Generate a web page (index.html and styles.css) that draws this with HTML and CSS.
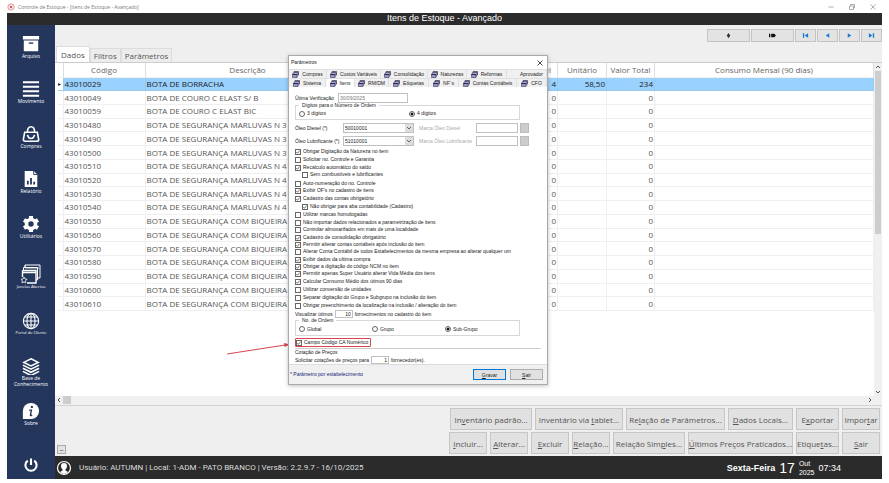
FILE: index.html
```
<!DOCTYPE html>
<html lang="pt-BR">
<head>
<meta charset="utf-8">
<title>Controle de Estoque</title>
<link rel="stylesheet" href="styles.css">
</head>
<body>
<svg class="defs" aria-hidden="true">
  <symbol id="win" viewBox="0 0 14 14">
    <path d="M4 1h9v7H4z" fill="#6a5fa8" stroke="#1c1c3c"/><path d="M2.500 3.500h9v7h-9z" fill="#fff" stroke="#1c1c3c"/><path d="M1 6h9v7H1z" fill="#9a95c8" stroke="#1c1c3c"/><path d="M1 6h9v2H1z" fill="#27265e"/>
  </symbol>
</svg>
<div class="app">
  <header class="titlebar">
    <svg class="logo" viewBox="0 0 10 10"><circle cx="5" cy="5" r="4" fill="#fbe9e9" stroke="#d88"/><path d="M3.500 3.500l3 3m0-3l-3 3" stroke="#c55" stroke-width="1.200"/></svg>
    <span>Controle de Estoque - [Itens de Estoque - Avançado]</span>
    <div class="winctl">
      <svg viewBox="0 0 8 8"><path d="M1.500 4h5"/></svg>
      <svg viewBox="0 0 8 8"><path d="M1.500 3h4v3.500h-4zM2.500 3V1.500h4V5H5.500"/></svg>
      <svg viewBox="0 0 8 8"><path d="M1.500 1.500l5 5m0-5l-5 5"/></svg>
    </div>
  </header>
  <h1 class="heading">Itens de Estoque - Avançado</h1>
  <div class="body">
    <nav class="side">
      <a href="#"><svg viewBox="0 0 20 20"><path fill="#fff" d="M1 1h18v4H1zM2 6h16v12H2z"/><path stroke="#24365c" stroke-width="1.500" d="M7.500 9h5"/></svg>Arquivo</a>
      <a href="#"><svg viewBox="0 0 20 20"><path stroke="#fff" stroke-width="2.200" d="M1 2.500h18M1 7.500h18M1 12.500h18M1 17.500h18"/></svg>Movimento</a>
      <a href="#"><svg viewBox="0 0 20 20" fill="none" stroke="#fff" stroke-width="1.800"><path d="M3 8h14l1.500 8q0 2-2 2h-13q-2 0-2-2zM6 8q0-6 4-6t4 6M6 11q1 4 4 4t4-4"/></svg>Compras</a>
      <a href="#"><svg viewBox="0 0 20 20"><path fill="#fff" d="M3 1h10l4 4v14H3z"/><path fill="none" stroke="#24365c" stroke-width="2" d="M6.500 16v-4M10 16V9M13.500 16v-3"/><path d="M13 1v4h4" fill="none" stroke="#24365c"/></svg>Relatório</a>
      <a href="#"><svg viewBox="0 0 20 20"><circle cx="10" cy="10" r="5" fill="none" stroke="#fff" stroke-width="4"/><path stroke="#fff" stroke-width="4.500" d="M10 1v4M10 15v4M2.200 5.500l3.500 2M14.300 12.500l3.500 2M2.200 14.500l3.500-2M14.300 7.500l3.500-2"/></svg>Utilitários</a>
      <a href="#" class="small windows"><svg viewBox="0 0 20 20" fill="none" stroke="#fff"><path d="M4 4V1h15v13h-2M2.500 6.500V3.500h14V16H15"/><path d="M1.500 6.500H15V19H6M1.500 6.500V13M1.500 8.500H15" stroke-width="1.400"/><path stroke-width=".8" d="M3 13l1 2 2 .3-1.500 1.500.3 2L3 18l-2 .8.300-2L0 15.300l2-.3zM4 1v3h14"/></svg>Janelas Abertas</a>
      <a href="#" class="small"><svg viewBox="0 0 20 20" fill="none" stroke="#fff" stroke-width="1.200"><circle cx="10" cy="10" r="8.500"/><ellipse cx="10" cy="10" rx="4.500" ry="8.500"/><path d="M10 1.500v17M1.500 10h17M3 5.500h14M3 14.500h14"/></svg>Portal do Cliente</a>
      <a href="#" class="two"><svg viewBox="0 0 20 20" fill="none" stroke="#fff" stroke-width="1.700"><path d="M10 2l8 4-8 4-8-4zM1 9l9 4.500L19 9M1 12.500L10 17l9-4.500M1 16l9 4.500L19 16"/></svg>Base de Conhecimento</a>
      <a href="#"><svg viewBox="0 0 20 20"><path fill="#fff" d="M10 1a9 9 0 1 1 0 18H1v-9a9 9 0 0 1 9-9z"/><circle cx="11" cy="5.500" r="1.300" fill="#24365c"/><path d="M8 9h2.500l-1.200 5.500q0 1 2 0" fill="none" stroke="#24365c" stroke-width="1.500"/></svg>Sobre</a>
      <a href="#" class="power" aria-label="Sair do sistema"><svg viewBox="0 0 20 20" fill="none" stroke="#fff" stroke-width="2.600"><path d="M10 2v8M6 4.500a7 7 0 1 0 8 0"/></svg></a>
    </nav>
    <main class="main">
      <div class="toolbar">
        <button class="wide" aria-label="Ordenar"><svg viewBox="0 0 8 8"><path d="M4 1l2 3-2 3-2-3z" fill="#333"/></svg></button>
        <button class="wide" aria-label="Ir para"><svg viewBox="0 0 8 8"><path d="M0 2h1.500v4H0zM2.500 2H6l2 2-2 2H2.500z" fill="#111"/></svg></button>
        <button aria-label="Primeiro"><svg viewBox="0 0 8 8"><path d="M1 1.500h1.500v5H1zM7 1.500v5L3 4z" fill="#1779d4"/></svg></button>
        <button aria-label="Anterior"><svg viewBox="0 0 8 8"><path d="M6 1.500v5L2 4z" fill="#1779d4"/></svg></button>
        <button aria-label="Próximo"><svg viewBox="0 0 8 8"><path d="M2 1.500v5L6 4z" fill="#1779d4"/></svg></button>
        <button aria-label="Último"><svg viewBox="0 0 8 8"><path d="M1 1.500v5L5 4zM5.500 1.500H7v5H5.500z" fill="#1779d4"/></svg></button>
      </div>
      <div class="tabs" role="tablist">
        <button role="tab" aria-selected="true" class="on">Dados</button><button role="tab">Filtros</button><button role="tab">Parâmetros</button>
      </div>
      <div class="grid">
        <div class="view">
          <table>
            <colgroup><col class="c0"><col class="c1"><col class="c2"><col><col class="c4"><col class="c5"><col class="c6"><col class="c7"></colgroup>
            <thead><tr><th></th><th>Código</th><th>Descrição</th><th></th><th class="r">Disponível</th><th>Unitário</th><th>Valor Total</th><th>Consumo Mensal (90 dias)</th></tr></thead>
            <tbody>
              <tr class="sel"><td class="mark">▸</td><td>43010029</td><td>BOTA DE BORRACHA</td><td></td><td>4</td><td>58,50</td><td>234</td><td></td></tr>
              <tr><td></td><td>43010049</td><td>BOTA DE COURO C ELAST S/ B</td><td></td><td>0</td><td></td><td>0</td><td></td></tr>
              <tr><td></td><td>43010059</td><td>BOTA DE COURO C ELAST BIC</td><td></td><td>0</td><td></td><td>0</td><td></td></tr>
              <tr><td></td><td>43010480</td><td>BOTA DE SEGURANÇA MARLUVAS N 3</td><td></td><td>0</td><td></td><td>0</td><td></td></tr>
              <tr><td></td><td>43010490</td><td>BOTA DE SEGURANÇA MARLUVAS N 3</td><td></td><td>0</td><td></td><td>0</td><td></td></tr>
              <tr><td></td><td>43010500</td><td>BOTA DE SEGURANÇA MARLUVAS N 3</td><td></td><td>0</td><td></td><td>0</td><td></td></tr>
              <tr><td></td><td>43010510</td><td>BOTA DE SEGURANÇA MARLUVAS N 4</td><td></td><td>0</td><td></td><td>0</td><td></td></tr>
              <tr><td></td><td>43010520</td><td>BOTA DE SEGURANÇA MARLUVAS N 4</td><td></td><td>0</td><td></td><td>0</td><td></td></tr>
              <tr><td></td><td>43010530</td><td>BOTA DE SEGURANÇA MARLUVAS N 4</td><td></td><td>0</td><td></td><td>0</td><td></td></tr>
              <tr><td></td><td>43010540</td><td>BOTA DE SEGURANÇA MARLUVAS N 4</td><td></td><td>0</td><td></td><td>0</td><td></td></tr>
              <tr><td></td><td>43010550</td><td>BOTA DE SEGURANÇA COM BIQUEIRA</td><td></td><td>0</td><td></td><td>0</td><td></td></tr>
              <tr><td></td><td>43010560</td><td>BOTA DE SEGURANÇA COM BIQUEIRA</td><td></td><td>0</td><td></td><td>0</td><td></td></tr>
              <tr><td></td><td>43010570</td><td>BOTA DE SEGURANÇA COM BIQUEIRA</td><td></td><td>0</td><td></td><td>0</td><td></td></tr>
              <tr><td></td><td>43010580</td><td>BOTA DE SEGURANÇA COM BIQUEIRA</td><td></td><td>0</td><td></td><td>0</td><td></td></tr>
              <tr><td></td><td>43010590</td><td>BOTA DE SEGURANÇA COM BIQUEIRA</td><td></td><td>0</td><td></td><td>0</td><td></td></tr>
              <tr><td></td><td>43010600</td><td>BOTA DE SEGURANÇA COM BIQUEIRA</td><td></td><td>0</td><td></td><td>0</td><td></td></tr>
              <tr><td></td><td>43010610</td><td>BOTA DE SEGURANÇA COM BIQUEIRA</td><td></td><td>0</td><td></td><td>0</td><td></td></tr>
            </tbody>
          </table>
        </div>
        <div class="vbar"><svg viewBox="0 0 8 8"><path d="M2 5l2-2 2 2"/></svg><i></i><svg viewBox="0 0 8 8"><path d="M2 3l2 2 2-2"/></svg></div>
        <div class="hbar"><svg viewBox="0 0 8 8"><path d="M5 2L3 4l2 2"/></svg><i></i><svg viewBox="0 0 8 8"><path d="M3 2l2 2-2 2"/></svg></div>
        <div class="corner"></div>
      </div>
      <div class="actions">
        <button class="minus" aria-label="Recolher">−</button>
        <div class="rows">
          <div class="row">
            <button class="b81">In<u>v</u>entário padrão...</button><button class="b88">Inventário via <u>t</u>ablet...</button><button class="b99">Re<u>l</u>ação de Parâmetros...</button><button class="b65"><u>D</u>ados Locais...</button><button class="b43">E<u>x</u>portar</button><button class="b38">Impor<u>t</u>ar</button>
          </div>
          <div class="row">
            <button class="b38"><u>I</u>ncluir...</button><button class="b38"><u>A</u>lterar...</button><button class="b38"><u>E</u>xcluir</button><button class="b38"><u>R</u>elação...</button><button class="b72">Relação Sim<u>p</u>les...</button><button class="b105"><u>Ú</u>ltimos Preços Praticados...</button><button class="b43">Etique<u>t</u>as...</button><button class="b38"><u>S</u>air</button>
          </div>
        </div>
      </div>
      <footer class="status">
        <svg viewBox="0 0 16 16"><circle cx="8" cy="8" r="6.500" fill="#2b2b2b" stroke="#fff" stroke-width="1.200"/><path fill="#fff" d="M8 3c2 0 3 1.200 3 3s-.8 2.600-1.500 3.300v1.200L12 12q-1.500 2-4 2t-4-2l2.500-1.500V9.300C5.800 8.600 5 7.800 5 6s1-3 3-3z"/></svg>
        <span class="user">Usuário: AUTUMN | Local: 1-ADM - PATO BRANCO | Versão: 2.2.9.7 - 16/10/2025</span>
        <div class="clock"><b>Sexta-Feira</b><span class="day">17</span><span class="my">Out<br>2025</span><span class="time">07:34</span></div>
      </footer>
    </main>
  </div>
  <svg class="arrow" viewBox="0 0 64 14"><path d="M0 12L58 3" stroke="#d9434e" stroke-width="1"/><path d="M57 1l6 1.500-5.500 2.500z" fill="#d9434e"/></svg>
  <form class="dialog" role="dialog" aria-label="Parâmetros">
    <div class="dtitle"><span>Parâmetros</span><button type="button" aria-label="Fechar"><svg viewBox="0 0 8 8"><path d="M1.500 1.500l5 5m0-5l-5 5" stroke="#333" stroke-width=".9"/></svg></button></div>
    <div class="dtabs one" role="tablist">
      <button type="button" role="tab"><svg><use href="#win"/></svg>Compras</button><button type="button" role="tab"><svg><use href="#win"/></svg>Custos Variáveis</button><button type="button" role="tab"><svg><use href="#win"/></svg>Consolidação</button><button type="button" role="tab"><svg><use href="#win"/></svg>Naturezas</button><button type="button" role="tab"><svg><use href="#win"/></svg>Reformas</button><button type="button" role="tab" class="end">Aprovador</button>
    </div>
    <div class="dtabs twor" role="tablist">
      <button type="button" role="tab"><svg><use href="#win"/></svg>Sistema</button><button type="button" role="tab" aria-selected="true" class="on"><svg><use href="#win"/></svg>Itens</button><button type="button" role="tab"><svg><use href="#win"/></svg>RM/DM</button><button type="button" role="tab"><svg><use href="#win"/></svg>Etiquetas</button><button type="button" role="tab"><svg><use href="#win"/></svg>NF´s</button><button type="button" role="tab"><svg><use href="#win"/></svg>Contas Contábeis</button><button type="button" role="tab"><svg><use href="#win"/></svg>CFO</button>
    </div>
    <div class="panel">
      <div class="line"><label for="uv">Útima Verificação</label><input id="uv" class="date" value="30/09/2025" disabled></div>
      <fieldset class="digits"><legend>Dígitos para o Número de Ordem</legend>
        <label><input type="radio" name="d">3 dígitos</label><label><input type="radio" name="d" checked>4 dígitos</label>
      </fieldset>
      <div class="oil"><label for="o1">Óleo Diesel (*)</label><select id="o1"><option>50010001</option></select><label class="dim" for="m1">Marca Óleo Diesel</label><input id="m1" disabled><button type="button" disabled aria-label="Buscar marca"></button></div>
      <div class="oil"><label for="o2">Óleo Lubrificante (*)</label><select id="o2"><option>51010001</option></select><label class="dim" for="m2">Marca Óleo Lubrificante</label><input id="m2" disabled><button type="button" disabled aria-label="Buscar marca"></button></div>
      <div class="opts">
        <label><input type="checkbox" checked>Obrigar Digitação da Natureza no item</label>
        <label><input type="checkbox">Solicitar no. Controle e Garantia</label>
        <label class="t"><input type="checkbox" checked>Recalculo automático do saldo</label>
        <label class="in s"><input type="checkbox">Sem combustíveis e lubrificantes</label>
        <label class="t"><input type="checkbox">Auto-numeração do no. Controle</label>
        <label><input type="checkbox" checked>Exibir OF's no cadastro de itens</label>
        <label><input type="checkbox" checked>Cadastro das contas obrigatório</label>
        <label class="in"><input type="checkbox" checked>Não obrigar para aba contabilidade (Cadastro)</label>
        <label><input type="checkbox">Utilizar marcas homologadas</label>
        <label class="t"><input type="checkbox">Não importar dados relacionados a parametrização de itens</label>
        <label><input type="checkbox">Controlar almoxarifados em mais de uma localidade</label>
        <label class="t"><input type="checkbox" checked>Cadastro de consolidação obrigatório</label>
        <label class="t"><input type="checkbox" checked>Permitir alterar contas contábeis após inclusão do item</label>
        <label><input type="checkbox">Alterar Conta Contábil de todos Estabelecimentos da mesma empresa ao alterar qualquer um</label>
        <label class="t"><input type="checkbox" checked>Exibir dados da ultima compra</label>
        <label class="t"><input type="checkbox" checked>Obrigar a digitação do código NCM no item</label>
        <label><input type="checkbox" checked>Permitir apenas Super Usuário alterar Vida Média dos itens</label>
        <label><input type="checkbox" checked>Calcular Consumo Médio dos útimos 90 dias</label>
        <label><input type="checkbox">Utilizar conversão de unidades</label>
        <label><input type="checkbox">Separar digitação do Grupo e Subgrupo na inclusão do item</label>
        <label><input type="checkbox">Obrigar preenchimento da localização na inclusão / alteração do item</label>
      </div>
      <div class="num"><label for="vu">Visualizar útimos</label><input id="vu" value="10"><span>fornecimentos no cadastro do item</span></div>
      <fieldset class="order"><legend>No. de Ordem</legend>
        <label><input type="radio" name="o">Global</label><label><input type="radio" name="o">Grupo</label><label><input type="radio" name="o" checked>Sub-Grupo</label>
      </fieldset>
      <label class="campo"><input type="checkbox" checked>Campo Código CA Numérico</label>
      <div class="quote">Cotação de Preços</div>
      <div class="num"><label for="sc">Solicitar cotações de preços para</label><input id="sc" value="1"><span>fornecedor(es).</span></div>
    </div>
    <div class="dfoot"><span>* Parâmetro por estabelecimento</span><button type="button" class="def"><u>G</u>ravar</button><button type="button"><u>S</u>air</button></div>
  </form>
</div>
</body>
</html>
```
FILE: styles.css
```
* { box-sizing: border-box; }
body { margin: 0; background: #fff; font-family: "Open Sans", sans-serif; font-size: 8px; color: #555; }
button, input, select { font: inherit; color: inherit; margin: 0; padding: 0; border-radius: 0; }
.defs { position: absolute; width: 0; height: 0; }
.app { position: relative; display: flex; flex-direction: column; height: 100vh; padding: 0 7px 4px; }
.titlebar { display: flex; align-items: center; height: 13px; gap: 3px; font-size: 5px; color: #777; }
.logo { width: 8px; height: 8px; }
.winctl { display: flex; gap: 13px; margin-left: auto; padding-right: 5px; }
.winctl svg { width: 8px; height: 8px; fill: none; stroke: #999; stroke-width: 0.8; }
.heading { margin: 0; height: 12px; background: #2b2b2b; color: #fff; font: 9px/11px "Liberation Sans", sans-serif; text-align: center; }
.body { display: flex; flex: 1; min-height: 0; }

.side { display: flex; flex-direction: column; width: 48px; background: #24365c; padding-top: 10px; flex: none; }
.side a { display: flex; flex-direction: column; align-items: center; height: 45px; font-size: 5px; line-height: 6px; color: #fff; text-decoration: none; text-align: center; white-space: nowrap; }
.side svg { width: 18px; height: 18px; flex: none; }
.side .two { white-space: normal; }
.side .power { height: 16px; margin-top: auto; margin-bottom: 6px; }
.side .power svg { width: 16px; height: 16px; }
.side .small { font-size: 4px; }
.side .windows { height: 48px; margin-top: 4px; }
.side .windows svg { width: 20px; height: 20px; }

.main { display: flex; flex-direction: column; flex: 1; min-width: 0; background: #efefef; }
.toolbar { display: flex; justify-content: flex-end; gap: 1px; height: 21px; padding-top: 4px; }
.toolbar button { width: 21px; height: 13px; display: flex; align-items: center; justify-content: center; background: #e3e3e3; border: 1px solid #c4c4c4; }
.toolbar .wide { width: 43px; }
.toolbar svg { width: 7px; height: 7px; }
.tabs { display: flex; align-items: flex-end; height: 16px; padding-left: 1px; }
.tabs button { height: 14px; padding: 0 3px; background: #ececec; border: 1px solid #dcdcdc; border-bottom: 0; font-size: 8px; line-height: 12px; }
.tabs .on { height: 16px; padding: 0 4px; background: #fff; }

.grid { flex: 1; min-height: 0; display: grid; grid-template-columns: 1fr 8px; grid-template-rows: 1fr 9px; background: #fff; border-top: 1px solid #ccc; border-bottom: 1px solid #d4d4d4; }
.view { overflow: hidden; padding-left: 3px; }
table { width: 100%; height: 248px; table-layout: fixed; border-collapse: collapse; font-size: 8px; line-height: 12px; }
.c0 { width: 5px; } .c1 { width: 82px; } .c2 { width: 205px; } .c4 { width: 56px; } .c5 { width: 49px; } .c6 { width: 48px; } .c7 { width: 219px; }
th, td { padding: 0 1px; border: 1px solid #efefef; border-width: 0 1px 1px 0; white-space: nowrap; overflow: hidden; }
th { font-weight: 400; text-align: center; color: #666; height: 14px; border-right-color: #ddd; }
th.r { text-align: right; padding-right: 6px; }
td:nth-child(n+5) { text-align: right; }
td.mark { padding: 0; font-size: 6px; color: #000; }
.sel td { background: #99d1ff; color: #222; border-color: #99c8ee; }
.sel td.mark { background: #fff; }
.vbar, .hbar { display: flex; background: #f0f0f0; }
.vbar { flex-direction: column; }
.vbar i { height: 49%; background: #cdcdcd; margin: 0 1px auto; }
.hbar i { width: 8px; background: #cdcdcd; margin-right: auto; margin-bottom: 1px; }
.corner { background: #f0f0f0; }
.vbar svg, .hbar svg { width: 8px; height: 8px; fill: none; stroke: #555; flex: none; }

.actions { display: flex; justify-content: space-between; align-items: flex-end; height: 50px; padding: 0 2px 2px; }
.minus { width: 9px; height: 9px; border: 1px solid #aaa; background: #e3e3e3; font-size: 8px; line-height: 6px; }
.rows { display: flex; flex-direction: column; gap: 2px; }
.row { display: flex; justify-content: flex-end; gap: 3px; }
.row button { height: 22px; background: #e1e1e1; border: 1px solid #c6c6c6; font-size: 8px; white-space: pre; display: flex; align-items: center; justify-content: center; }
.b38 { width: 38px; } .b43 { width: 43px; } .b65 { width: 65px; } .b72 { width: 72px; } .b81 { width: 82px; } .b88 { width: 88px; } .b99 { width: 99px; } .b105 { width: 105px; }
.status { display: flex; align-items: center; height: 23px; background: #2b2b2b; color: #fff; font: 8px/10px "Liberation Sans", sans-serif; padding-left: 1px; gap: 7px; }
.status > svg { width: 16px; height: 16px; }
.user { font-family: Roboto, sans-serif; color: #ddd; }
.clock { display: flex; align-items: center; gap: 4px; margin-left: auto; padding-right: 41px; }
.clock b { font-size: 9px; }
.day { font-size: 14px; }
.my { font-size: 7px; line-height: 9px; }
.time { font-size: 9px; }

.arrow { position: absolute; left: 227px; top: 342px; width: 64px; height: 14px; }
.dialog { position: absolute; left: 288px; top: 55px; width: 260px; background: #fff; border: 1px solid #aaa; font: 5px/7px "Liberation Sans", sans-serif; color: #222; box-shadow: 0 1px 4px rgba(0, 0, 0, 0.25); }
.dtitle { display: flex; justify-content: space-between; align-items: center; height: 13px; padding: 0 3px 0 2px; font-size: 5px; }
.dtitle button { border: 0; background: none; width: 8px; height: 8px; }
.dtitle svg { display: block; }
.dtabs { display: grid; height: 9px; background: #f0f0f0; }
.one { grid-template-columns: 38px 54px 47px 39px 40px 1fr; }
.twor { grid-template-columns: 37px 29px 34px 40px 30px 58px 1fr; }
.dtabs button { display: flex; align-items: center; justify-content: center; gap: 3px; border: 1px solid #e0e0e0; border-width: 1px 1px 0 0; background: #f0f0f0; white-space: nowrap; }
.dtabs .on { background: #fff; }
.dtabs .end { justify-content: flex-end; padding-right: 3px; }
.dtabs svg { width: 7px; height: 7px; flex: none; }
.panel { padding: 6px 6px 0; height: 277px; }
.line { display: flex; align-items: center; gap: 4px; }
.panel input:not([type]), select { border: 1px solid #c0c0c0; background: #fff; height: 10px; padding: 0 1px; }
.panel input.date { width: 70px; color: #777; }
fieldset { display: grid; margin: 0; padding: 0 3px; border: 1px solid #d8d8d8; width: 225px; }
legend { padding: 0 3px; line-height: 5px; }
fieldset label, .opts label, .campo { display: flex; align-items: center; gap: 2px; white-space: nowrap; }
.digits { grid-template-columns: 110px 1fr; height: 17px; }
.order { grid-template-columns: 73px 73px 1fr; height: 18px; }
input[type=radio], input[type=checkbox] { appearance: none; width: 6px; height: 6px; border: 1px solid #666; background: #fff; flex: none; }
input[type=radio] { border-radius: 50%; }
input[type=radio]:checked { background: radial-gradient(#111 45%, #fff 60%); }
input[type=checkbox]:checked { background: #fff url("data:image/svg+xml,%3Csvg xmlns='http://www.w3.org/2000/svg' viewBox='0 0 4 4'%3E%3Cpath d='M.3 2l1.200 1.300L3.700.6' fill='none' stroke='%23333' stroke-width='.7'/%3E%3C/svg%3E"); }
.oil { display: grid; grid-template-columns: 48px 71px 5px 52px 5px 42px 2px 9px; align-items: center; height: 10px; margin-top: 3px; white-space: nowrap; }
select { appearance: none; background: #fff url("data:image/svg+xml,%3Csvg xmlns='http://www.w3.org/2000/svg' viewBox='0 0 8 8'%3E%3Cpath d='M0 0h8v8H0z' fill='%23ddd'/%3E%3Cpath d='M2 3l2 2 2-2' fill='none' stroke='%23666'/%3E%3C/svg%3E") right / 8px 8px no-repeat; }
.oil .dim { grid-column: 4; color: #aaa; }
.oil input { grid-column: 6; min-width: 0; }
.oil button { grid-column: 8; height: 10px; background: #ccc; border: 1px solid #bbb; }
.opts { margin-top: 2px; }
.opts label { height: 7px; margin-bottom: 1px; }
.opts .t { margin-bottom: 0; }
.opts .in { padding-left: 7px; }
.opts .s { margin-bottom: 2px; }
.num { display: flex; align-items: center; gap: 2px; }
.panel .num input { width: 18px; height: 8px; text-align: right; }
.campo { width: 76px; height: 9px; border: 1px solid #d9434e; border-radius: 1px; margin-top: 2px; }
.quote { border-top: 1px solid #ccc; margin-top: 1px; }
.dfoot { display: flex; align-items: center; gap: 4px; height: 20px; background: #f0f0f0; border-top: 1px solid #ddd; padding: 0 4px 0 1px; color: #22227a; }
.dfoot span { margin-right: auto; }
.dfoot button { width: 33px; height: 11px; border: 1px solid #adadad; background: #e1e1e1; color: #222; line-height: 8px; }
.dfoot .def { border-color: #0078d7; }
```
